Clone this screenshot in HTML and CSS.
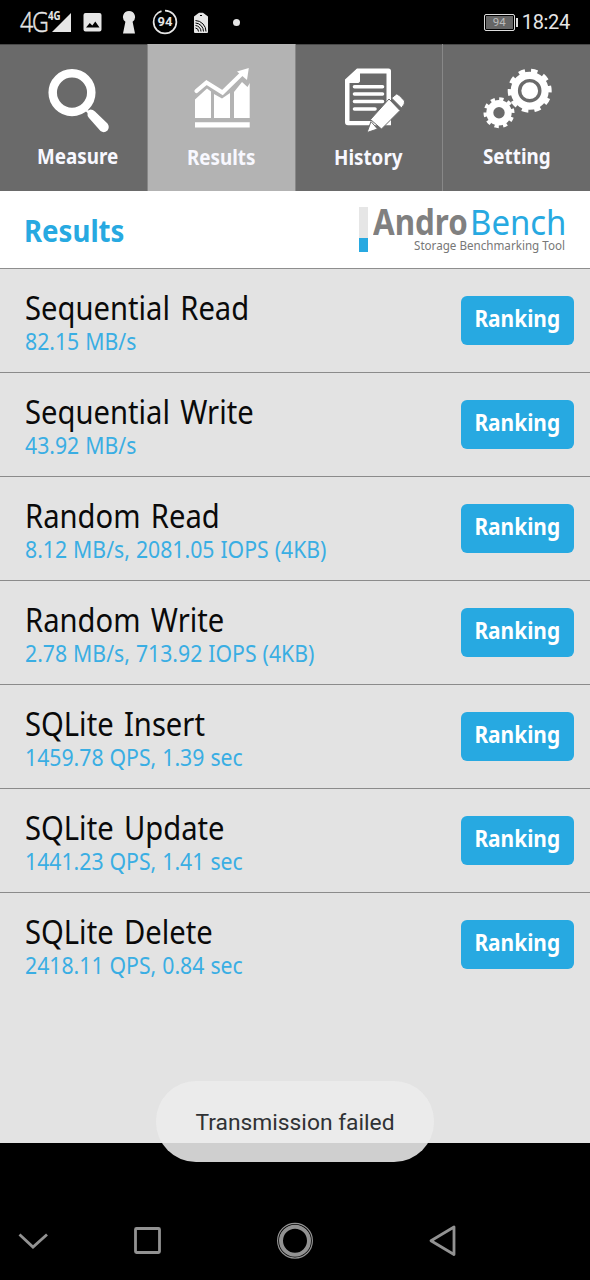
FILE: index.html
```html
<!DOCTYPE html>
<html lang="en">
<head>
<meta charset="utf-8">
<title>AndroBench</title>
<link rel="stylesheet" href="styles.css">
</head>
<body>
<div class="screen">
  <header class="status">
    <div class="status-left">
      <span class="net">4G</span>
      <svg class="signal" width="24" height="24" viewBox="0 0 24 24"><path d="M23 3V22H4Z"/></svg>
      <span class="net-small">4G</span>
      <svg class="st-image" width="20" height="20" viewBox="0 0 20 20"><path fill-rule="evenodd" d="M2.500 1H16.500Q18.500 1 18.500 3V17.500Q18.500 19.500 16.500 19.500H2.500Q.5 19.500 .5 17.500V3Q.5 1 2.500 1ZM3 15.500H16.500L12.300 9.500L9.300 13.500L6.800 11Z"/></svg>
      <svg class="st-key" width="14" height="24" viewBox="0 0 14 24"><path d="M7 1a6 6 0 0 1 3.600 10.800L13 23.500H1L3.400 11.800A6 6 0 0 1 7 1Z"/></svg>
      <span class="gauge">
        <svg width="26" height="26" viewBox="0 0 26 26"><circle cx="13" cy="13" r="11.400" pathLength="100" stroke-dasharray="95 5" transform="rotate(-90 13 13)"/></svg>
        <b>94</b>
      </span>
      <svg class="st-card" width="16" height="22" viewBox="0 0 16 22"><path d="M1 4.500L6 .8H10L15 4.500V20Q15 21 14 21H2Q1 21 1 20Z"/><g fill="none" stroke="#000"><path d="M2.500 8.500A11 11 0 0 1 13 19.500M2.500 11A8.500 8.500 0 0 1 10.500 19.500M2.500 13.500A6 6 0 0 1 8 19.500M2.500 16A3.500 3.500 0 0 1 5.500 19.500M7 3.500H9"/></g></svg>
      <i class="dot"></i>
    </div>
    <div class="status-right">
      <span class="battery">94</span><i class="battery-tip"></i>
      <span class="clock">18:24</span>
    </div>
  </header>

  <nav class="tabs">
    <a class="tab">
      <svg width="148" height="96" viewBox="0 44 148 96"><circle cx="72" cy="92.600" r="19.300" fill="none" stroke="#fff" stroke-width="8.500"/><path d="M85 107L88 110.500L90.500 109.500Q93 109.500 95 111.500L107.500 123.500Q110 127 107.500 130.500Q104 133.500 100.500 131L89 118Q87 116 87.500 113L83.500 109Z"/></svg>
      <span class="label label-measure">Measure</span>
    </a>
    <a class="tab active">
      <svg width="148" height="96" viewBox="148 44 148 96"><path d="M195 99.500L207 88.500L211 91.500V118H195ZM214 94L222 98.500L230 93V118H214ZM234 92L242 82L247.500 87L249.700 83V118H234ZM195 122.300H249.700V127.500H195Z"/><path d="M196.500 91L206.500 82.500L222.500 92.500L241 74.500" fill="none" stroke="#fff" stroke-width="4.200" stroke-linecap="round"/><path d="M248.800 68L247 80L237 71.500Z"/></svg>
      <span class="label label-results">Results</span>
    </a>
    <a class="tab">
      <svg width="148" height="96" viewBox="295 44 148 96"><path fill-rule="evenodd" d="M356 68.500H387.500Q390 68.500 390 71V125.300H347Q344 125.300 344 122.300V79.500ZM359 73.500V80Q359 83 356 83H348.500V121H385.500V73.500Z"/><path d="M356 69L359 73V80Q359 83 356 83H346V79Z"/><path d="M353.500 86.700H381.500M353.500 94H381.500M353.500 101.500H381.500M353.500 109H374" fill="none" stroke="#fff" stroke-width="3.600" stroke-linecap="round"/><path class="pencil" d="M388 99L399 110.500L380.500 129L369.500 119.500Z"/><path class="pencil" d="M390.500 98L395.500 94Q397.500 94 403.500 101Q404.500 103.500 400.500 108Z"/><path class="pencil" d="M370 121.500L366 132.500L376.500 129Z"/></svg>
      <span class="label label-history">History</span>
    </a>
    <a class="tab">
      <svg width="148" height="96" viewBox="442 44 148 96">
        <circle cx="528.700" cy="90.700" r="15.400" class="ring" stroke-width="7.200"/>
        <circle cx="528.700" cy="90.700" r="20" class="ring" stroke-width="4" pathLength="100" stroke-dasharray="5.200 4.800" transform="rotate(-14 528.700 90.700)"/>
        <circle cx="528.700" cy="90.700" r="8.400"/>
        <circle cx="498" cy="112.700" r="9.200" class="ring" stroke-width="7"/>
        <circle cx="498" cy="112.700" r="13.800" class="ring" stroke-width="3.400" pathLength="100" stroke-dasharray="5 5" transform="rotate(-17 498 112.700)"/>
      </svg>
      <span class="label label-setting">Setting</span>
    </a>
  </nav>

  <section class="heading">
    <h1><span class="fit">Results</span></h1>
    <div class="brand">
      <i class="brand-bar"></i>
      <div class="brand-text">
        <div class="brand-name"><b>Andro</b><span>Bench</span></div>
        <div class="tagline"><span>Storage Benchmarking Tool</span></div>
      </div>
    </div>
  </section>

  <main class="list">
    <div class="row"><div><div class="title"><span>Sequential Read</span></div><div class="value"><span>82.15 MB/s</span></div></div><a class="rank"><span>Ranking</span></a></div>
    <div class="row"><div><div class="title"><span>Sequential Write</span></div><div class="value"><span>43.92 MB/s</span></div></div><a class="rank"><span>Ranking</span></a></div>
    <div class="row"><div><div class="title"><span>Random Read</span></div><div class="value"><span>8.12 MB/s, 2081.05 IOPS (4KB)</span></div></div><a class="rank"><span>Ranking</span></a></div>
    <div class="row"><div><div class="title"><span>Random Write</span></div><div class="value"><span>2.78 MB/s, 713.92 IOPS (4KB)</span></div></div><a class="rank"><span>Ranking</span></a></div>
    <div class="row"><div><div class="title"><span>SQLite Insert</span></div><div class="value"><span>1459.78 QPS, 1.39 sec</span></div></div><a class="rank"><span>Ranking</span></a></div>
    <div class="row"><div><div class="title"><span>SQLite Update</span></div><div class="value"><span>1441.23 QPS, 1.41 sec</span></div></div><a class="rank"><span>Ranking</span></a></div>
    <div class="row"><div><div class="title"><span>SQLite Delete</span></div><div class="value"><span>2418.11 QPS, 0.84 sec</span></div></div><a class="rank"><span>Ranking</span></a></div>
  </main>

  <footer class="navbar">
    <svg width="590" height="60" viewBox="0 1210 590 60"><path d="M19.500 1234.500L33 1247L47 1234.500"/><rect x="135.500" y="1228.500" width="24" height="24" rx="1"/><circle cx="295" cy="1240.700" r="14" stroke-width="4"/><circle cx="295" cy="1240.700" r="17.400" stroke-width="1.200"/><path d="M454 1227V1254.500L431 1240.700Z" stroke-linejoin="round"/></svg>
  </footer>
  <div class="toast">Transmission failed</div>
</div>
</body>
</html>
```
FILE: styles.css
```css
* { box-sizing: border-box; }
body { margin: 0; background: #000; font-family: "Noto Sans", sans-serif; }
.screen { position: relative; width: 590px; height: 1280px; display: flex; flex-direction: column; overflow: hidden; background: #000; }
svg { display: block; flex: none; }

.status { height: 44px; flex: none; display: flex; justify-content: space-between; padding: 0 20px 0 20px; color: #e6e6e6; font-family: Roboto, sans-serif; }
.status-left, .status-right { display: flex; align-items: center; height: 44px; position: relative; }
.status-left svg { fill: #e6e6e6; }
.net { width: 28px; font: 300 27px/44px "Open Sans", sans-serif; letter-spacing: -1.500px; transform: scaleX(.86); transform-origin: left; -webkit-text-stroke: .5px; }
.signal { margin-top: -1px; }
.net-small { position: absolute; left: 28px; top: 9px; font: 700 11.500px/14px "Noto Sans", sans-serif; background: #000; transform: scaleX(.85); transform-origin: left; clip-path: inset(0 0 2px 0); }
.st-image { margin: 0 0 0 11px; }
.st-key { margin: 0 0 0 19px; }
.gauge { position: relative; width: 26px; height: 26px; margin-left: 16px; }
.gauge svg { fill: none; stroke: #e6e6e6; stroke-width: 1.700; }
.gauge b { position: absolute; inset: 0; text-align: center; font: 700 13px/26px Roboto, sans-serif; }
.st-card { margin: 1px 0 0 15px; }
.dot { width: 7px; height: 7px; border-radius: 50%; background: #e6e6e6; margin-left: 24px; }
.battery { width: 31px; height: 17px; border: 1.500px solid #ddd; border-radius: 2px; background: #666; box-shadow: inset 0 0 0 1px #000; color: #bbb; font: 11.500px/15px Roboto, sans-serif; text-align: center; }
.battery-tip { width: 2px; height: 9px; background: #ddd; margin: 0 4px 0 1px; }
.clock { font-size: 20px; letter-spacing: -.3px; }

.tabs { height: 147px; flex: none; display: flex; background: #6a6a6a; border-top: 1px solid #484848; }
.tab { flex: 1; border-left: 1px solid #888; overflow: hidden; margin-top: -1px; }
.tab:first-child { border-left: 0; }
.tab svg { fill: #fff; }
.tab .ring { fill: none; stroke: #fff; }
.pencil { stroke: #6a6a6a; stroke-width: 1; }
.active { background: #b3b3b3; }
.label { display: inline-block; font: 700 22px/30px "Noto Sans", sans-serif; color: #f8f8ff; transform-origin: left; margin-top: 0; transform: scaleX(.855); }
.label-measure { margin-left: 37px; }
.label-results { margin-left: 39px; margin-top: 1px; }
.label-history { margin-left: 38px; margin-top: 1px; }
.label-setting { margin-left: 40px; }

.heading { height: 78px; flex: none; display: flex; justify-content: space-between; padding: 16px 22px 0 24px; background: #fff; border-bottom: 1px solid #8e8e8e; }
h1 { margin: 5px 0 0; font: 700 30px/38px "Noto Sans", sans-serif; color: #27a9e1; }
.fit { display: inline-block; transform: scaleX(.92); transform-origin: left; }
.brand { display: flex; width: 209px; margin-left: auto; }
.brand-bar { width: 9px; height: 45px; background: linear-gradient(#e6e6e6 31px, #27a9e1 31px); flex: none; margin: 0 5px 0 0; }
.brand-text { flex: 1; }
.brand-name { display: flex; height: 31px; font-size: 35px; line-height: 29px; color: #27a9e1; }
.brand-name b { width: 97px; color: #808080; transform: scaleX(.895); transform-origin: left; }
.brand-name span { transform: scaleX(.94); transform-origin: left; }
.tagline { margin: 0 0 0 41px; font-size: 12.500px; line-height: 16px; white-space: nowrap; color: #777; }
.tagline span { display: inline-block; transform: scaleX(.93); transform-origin: left; }

.list { height: 874px; flex: none; background: #e3e3e3; }
.row { height: 104px; display: flex; justify-content: space-between; align-items: flex-start; padding: 19px 16px 0 25px; border-bottom: 1px solid #8b8b8b; }
.row:last-child { border-bottom-color: transparent; }
.title, .value { white-space: nowrap; }
.title { height: 39px; font-size: 32px; line-height: 40px; color: #0a0a0a; word-spacing: 3px; }
.title span, .value span { display: inline-block; transform-origin: left; }
.title span { transform: scaleX(.912); }
.value { font-size: 23px; line-height: 28px; height: 28px; color: #3aaee3; word-spacing: .5px; }
.value span { transform: scaleX(.923); }
.rank { width: 113px; height: 49px; margin-top: 8px; border-radius: 6px; background: #27a9e1; color: #fff; font: 700 24px/43px "Noto Sans", sans-serif; display: flex; justify-content: center; }
.rank span { transform: scaleX(.87); height: 43px; }

.navbar { flex: 1; display: flex; align-items: flex-end; padding-bottom: 10px; }
.navbar svg { fill: none; stroke: #929292; stroke-width: 2.800; }
.toast { position: absolute; left: 156px; top: 1081px; width: 278px; height: 81px; border-radius: 40px; background: rgba(236, 236, 236, .877); color: #303234; font: 22.800px/84px Roboto, sans-serif; text-align: center; }
```
